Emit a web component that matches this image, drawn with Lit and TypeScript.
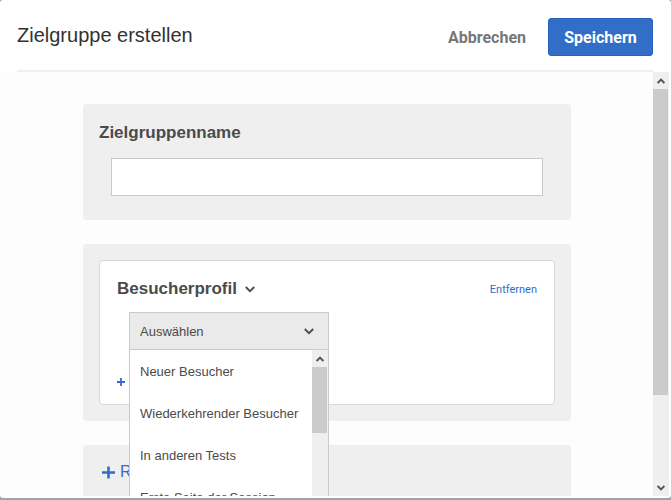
import { LitElement, html, css } from "lit";
import { customElement, property } from "lit/decorators.js";

const chevronIcon = html`
  <svg width="10" height="7" viewBox="0 0 10 7" aria-hidden="true">
    <path d="M0.8 1L5 5.2L9.2 1" fill="none" stroke="currentColor" stroke-width="1.8" />
  </svg>`;

@customElement("scroll-rail")
class ScrollRail extends LitElement {
  @property({ type: Number }) share = 0.5;

  static styles = css`
    :host {
      display: flex;
      flex-direction: column;
      flex: none;
      width: 16px;
      background: #efefef;
    }
    .step {
      display: flex;
      align-items: center;
      justify-content: center;
      flex: none;
      width: 15px;
      height: 17px;
      margin: 0;
      padding: 0;
      border: 0;
      background: none;
      color: #555;
    }
    .track {
      flex: 1;
      min-height: 0;
    }
    .thumb {
      width: 15px;
      background: #cbcbcb;
    }
  `;

  render() {
    return html`
      <button class="step" aria-label="Nach oben">
        <svg width="8" height="6" viewBox="0 0 8 6" aria-hidden="true">
          <path d="M0.6 5L4 1.6L7.4 5" fill="none" stroke="currentColor" stroke-width="2" />
        </svg>
      </button>
      <div class="track"><div class="thumb" style="height:${this.share * 100}%"></div></div>
      <button class="step" aria-label="Nach unten">
        <svg width="8" height="6" viewBox="0 0 8 6" aria-hidden="true">
          <path d="M0.6 1L4 4.4L7.4 1" fill="none" stroke="currentColor" stroke-width="2" />
        </svg>
      </button>
    `;
  }
}

@customElement("app-root")
class AppRoot extends LitElement {
  private options = [
    "Neuer Besucher",
    "Wiederkehrender Besucher",
    "In anderen Tests",
    "Erste Seite der Session",
  ];

  static styles = css`
    :host {
      display: block;
      height: 100vh;
      box-sizing: border-box;
      padding-bottom: 2px;
      overflow: hidden;
      background: #a2a2a2;
      color: #4b4b4b;
      font-family: "Liberation Sans", Arial, sans-serif;
      font-size: 13px;
    }
    * {
      box-sizing: border-box;
    }
    button {
      margin: 0;
      padding: 0;
      border: 0;
      background: none;
      font: inherit;
      color: inherit;
      cursor: pointer;
    }
    .dialog {
      display: flex;
      flex-direction: column;
      height: 100%;
      padding: 0 2px 2px 1px;
      border-radius: 3px;
      background: #fff;
    }
    .header {
      display: flex;
      align-items: center;
      flex: none;
      height: 72px;
      margin: 0 16px;
      border-bottom: 2px solid #f0f0f0;
    }
    .title {
      flex: 1;
      margin: 0;
      color: #323232;
      font-size: 20px;
      font-weight: 400;
      line-height: 24px;
    }
    .actions {
      display: flex;
      gap: 22px;
      padding-top: 4px;
    }
    .cancel,
    .save {
      height: 38px;
      font-family: Roboto, sans-serif;
      font-size: 16px;
      font-weight: 700;
    }
    .cancel {
      color: #777;
    }
    .save {
      width: 105px;
      border: 1px solid #2462bd;
      border-radius: 3px;
      background: #326ec8;
      color: #fff;
    }
    .body {
      display: flex;
      flex: 1;
      min-height: 0;
      background: #fdfdfd;
    }
    .content {
      flex: 1;
      min-width: 0;
      padding: 32px 16px 0;
      overflow: hidden;
    }
    .panel {
      max-width: 488px;
      margin: 0 auto 24px;
      padding: 16px;
      border-radius: 4px;
      background: #efefef;
    }
    .label {
      display: block;
      font-size: 17px;
      font-weight: 700;
      line-height: 26px;
    }
    .name {
      display: block;
      width: calc(100% - 24px);
      height: 38px;
      margin: 12px 12px 8px;
      padding: 0 10px;
      border: 1px solid #cacaca;
      border-radius: 0;
      background: #fff;
      font: inherit;
    }
    .card {
      height: 145px;
      padding: 15px 17px;
      border: 1px solid #d8d8d8;
      border-radius: 4px;
      background: #fff;
    }
    .row {
      display: flex;
      align-items: center;
      justify-content: space-between;
      height: 26px;
    }
    .rule {
      display: flex;
      align-items: center;
      gap: 8px;
    }
    .remove {
      color: #326ec8;
      font-family: Roboto, sans-serif;
      font-size: 11px;
      text-decoration: none;
    }
    .picker {
      position: relative;
      width: 200px;
      margin: 10px 0 0 12px;
    }
    .select {
      display: block;
      width: 100%;
      height: 38px;
      padding: 0 10px;
      border: 1px solid #cacaca;
      border-radius: 0;
      background: #eaeaea;
      appearance: none;
      color: inherit;
      font: inherit;
    }
    .arrow {
      display: flex;
      align-items: center;
      position: absolute;
      top: 0;
      right: 15px;
      height: 38px;
      pointer-events: none;
    }
    .menu {
      display: flex;
      position: absolute;
      top: 100%;
      left: 0;
      z-index: 1;
      width: 100%;
      height: 176px;
      border: 1px solid #cacaca;
      border-top: 0;
      background: #fff;
    }
    .options {
      flex: 1;
      min-width: 0;
      overflow: hidden;
      white-space: nowrap;
    }
    .option {
      display: block;
      width: 100%;
      height: 42px;
      padding: 0 10px;
      text-align: left;
    }
    .add {
      display: flex;
      align-items: center;
      height: 20px;
      margin-top: 22px;
      color: #326ec8;
    }
    .more {
      display: flex;
      align-items: center;
      gap: 5px;
      height: 22px;
      margin-left: 3px;
      color: #326ec8;
      font-size: 16px;
    }
    .last {
      min-height: 116px;
    }
  `;

  render() {
    return html`
      <main class="dialog">
        <header class="header">
          <h1 class="title">Zielgruppe erstellen</h1>
          <div class="actions">
            <button class="cancel">Abbrechen</button>
            <button class="save">Speichern</button>
          </div>
        </header>
        <div class="body">
          <div class="content">
            <section class="panel">
              <label class="label" for="name">Zielgruppenname</label>
              <input class="name" id="name" type="text" />
            </section>
            <section class="panel">
              <div class="card">
                <div class="row">
                  <button class="label rule">Besucherprofil ${chevronIcon}</button>
                  <a class="remove" href="#">Entfernen</a>
                </div>
                <div class="picker">
                  <select class="select" aria-label="Besucherprofil">
                    <option>Auswählen</option>
                  </select>
                  <span class="arrow">${chevronIcon}</span>
                  <div class="menu">
                    <div class="options" role="listbox" aria-label="Besucherprofil">
                      ${this.options.map(
                        (o) => html`<button class="option" role="option">${o}</button>`,
                      )}
                    </div>
                    <scroll-rail .share=${0.47}></scroll-rail>
                  </div>
                </div>
                <button class="add" aria-label="+">
                  <svg width="8" height="8" viewBox="0 0 8 8" aria-hidden="true">
                    <path d="M4 0V8M0 4H8" stroke="currentColor" stroke-width="1.8" />
                  </svg>
                </button>
              </div>
            </section>
            <section class="panel last">
              <button class="more">
                <svg width="13" height="13" viewBox="0 0 13 13" aria-hidden="true">
                  <path d="M6.5 0.5V12.5M0 6.5H13" stroke="currentColor" stroke-width="2.6" />
                </svg>
                R
              </button>
            </section>
          </div>
          <scroll-rail .share=${0.785}></scroll-rail>
        </div>
      </main>
    `;
  }
}
